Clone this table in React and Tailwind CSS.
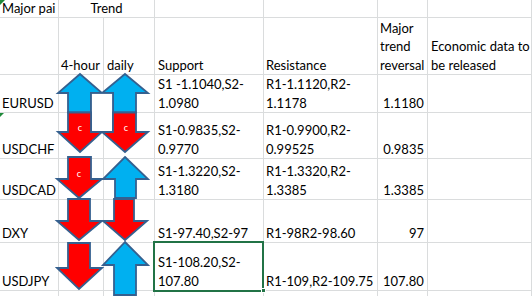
import React from 'react';

// Excel-like sheet with trend arrows drawn over the cells
const rows = [
  { pair: 'EURUSD', s: ['S1 -1.1040,S2-', '1.0980'], r: ['R1-1.1120,R2-', '1.1178'], rev: '1.1180', left: true },
  { pair: 'USDCHF', s: ['S1-0.9835,S2-', '0.9770'], r: ['R1-0.9900,R2-', '0.99525'], rev: '0.9835' },
  { pair: 'USDCAD', s: ['S1-1.3220,S2-', '1.3180'], r: ['R1-1.3320,R2-', '1.3385'], rev: '1.3385' },
  { pair: 'DXY', s: ['S1-97.40,S2-97'], r: ['R1-98R2-98.60'], rev: '97' },
  { pair: 'USDJPY', s: ['S1-108.20,S2-', '107.80'], r: ['R1-109,R2-109.75'], rev: '107.80', left: true },
];

const heights = ['h-[38px]', 'h-[46px]', 'h-[41px]', 'h-[43px]', 'h-[48px]'];

const Cell = ({ className = '', children }) => (
  <div className={`border-r border-b border-[#dadcdd] flex flex-col justify-end px-[2px] leading-[18.5px] overflow-hidden whitespace-nowrap ${className}`}>
    {children}
  </div>
);

const up = (cx, top, hb, hl, hr, sl, sr, b) =>
  `${cx},${top} ${hr},${hb} ${sr},${hb} ${sr},${b} ${sl},${b} ${sl},${hb} ${hl},${hb}`;
const down = (cx, tip, hb, hl, hr, sl, sr, t) =>
  `${sl},${t} ${sr},${t} ${sr},${hb} ${hr},${hb} ${cx},${tip} ${hl},${hb} ${sl},${hb}`;

const BLUE = '#00b0f0';
const RED = '#ff0000';
const EDGE = '#35608f';

const Arrows = () => (
  <svg className="absolute left-0 top-0 pointer-events-none" width="532" height="296" viewBox="0 0 532 296">
    <g stroke={EDGE} strokeWidth="1.8" strokeLinejoin="miter">
      <polygon points={up(80, 74, 93, 58, 102, 68, 91, 112.5)} fill={BLUE} />
      <polygon points={up(125, 74, 93, 102, 148, 113, 136, 112.5)} fill={BLUE} />
      <rect x="91" y="93" width="22" height="39" fill="#ffffff" />
      <polygon points={down(80, 152, 132, 58, 102, 68, 91, 112.5)} fill={RED} />
      <polygon points={down(125, 152, 132, 102, 148, 113, 136, 112.5)} fill={RED} />

      <polygon points={down(79, 198, 179, 57, 102, 68, 91, 157)} fill={RED} />
      <polygon points={up(125, 157, 179, 103, 148, 115, 136, 198)} fill={BLUE} />

      <polygon points={down(79, 240, 221, 57, 102, 68, 90, 199)} fill={RED} />
      <polygon points={down(125, 240, 221, 103, 147, 114, 134, 199)} fill={RED} />

      <polygon points={down(79, 289, 268, 57, 102, 68, 90, 243)} fill={RED} />
      <polygon points={up(125, 242, 265, 103, 148, 114, 136, 295)} fill={BLUE} />
    </g>
    <g fill="#ffffff" fontFamily="Lato, 'Liberation Sans', sans-serif" fontSize="9" textAnchor="middle">
      <text x="80" y="131">c</text>
      <text x="126" y="131">c</text>
      <text x="79" y="177">c</text>
    </g>
  </svg>
);

export default function App() {
  return (
    <div className="relative w-[532px] h-[296px] overflow-hidden bg-white text-black text-[13px] font-['Lato','Liberation_Sans',sans-serif]">
      <div className="grid grid-cols-[59px_45px_51px_109px_114px_50px_1fr]">
        {/* row 1 */}
        <Cell className="h-[18px]">Major pai</Cell>
        <Cell className="h-[18px] col-span-2 items-center">Trend</Cell>
        <Cell className="h-[18px]" />
        <Cell className="h-[18px]" />
        <Cell className="h-[18px]" />
        <Cell className="h-[18px]" />

        {/* row 2 */}
        <Cell className="h-[57px]" />
        <Cell className="h-[57px]">4-hour</Cell>
        <Cell className="h-[57px] pl-[3px]">daily</Cell>
        <Cell className="h-[57px] pl-[3px]">Support</Cell>
        <Cell className="h-[57px]">Resistance</Cell>
        <Cell className="h-[57px]">
          <span>Major</span>
          <span>trend</span>
          <span>reversal</span>
        </Cell>
        <Cell className="h-[57px] pl-[3px]">
          <span>Economic data to</span>
          <span>be released</span>
        </Cell>

        {rows.map((r, i) => (
          <React.Fragment key={r.pair}>
            <Cell className={heights[i]}>{r.pair}</Cell>
            <Cell className={heights[i]} />
            <Cell className={heights[i]} />
            <Cell className={`${heights[i]} pl-[3px]`}>
              {r.s.map((t) => (
                <span key={t}>{t}</span>
              ))}
            </Cell>
            <Cell className={heights[i]}>
              {r.r.map((t) => (
                <span key={t}>{t}</span>
              ))}
            </Cell>
            <Cell className={`${heights[i]} ${r.left ? 'items-start pl-[5px]' : 'items-end pr-[3px]'}`}>{r.rev}</Cell>
            <Cell className={heights[i]} />
          </React.Fragment>
        ))}

        {/* row 8 */}
        <Cell className="h-[10px]" />
        <Cell className="h-[10px]" />
        <Cell className="h-[10px]" />
        <Cell className="h-[10px]" />
        <Cell className="h-[10px]" />
        <Cell className="h-[10px]" />
        <Cell className="h-[10px]" />
      </div>

      <Arrows />

      {/* selected cell D7 */}
      <div className="absolute left-[153px] top-[241px] w-[111px] h-[51px] border-2 border-[#217346]" />
      <div className="absolute left-[261px] top-[288px] w-[5px] h-[5px] bg-[#217346] border border-white" />

      {/* error indicators */}
      <div className="absolute left-0 top-0 w-0 h-0 border-t-[5px] border-r-[5px] border-t-[#1f8a3a] border-r-transparent" />
      <div className="absolute left-0 top-[113px] w-0 h-0 border-t-[4px] border-r-[4px] border-t-[#1f8a3a] border-r-transparent" />
    </div>
  );
}
